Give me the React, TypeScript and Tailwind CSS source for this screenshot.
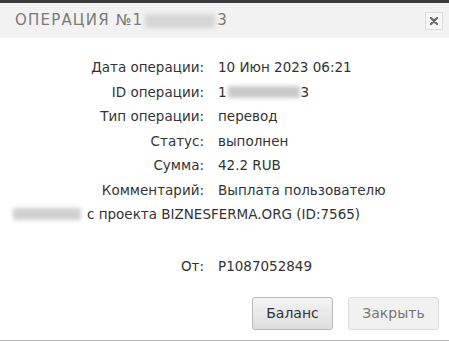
import React from "react";

const rows: [string, React.ReactNode][] = [
  ["Дата операции:", "10 Июн 2023 06:21"],
  [
    "ID операции:",
    <span className="inline-flex items-center">
      1<span className="inline-block w-[72px] h-[12px] bg-[#c9c9c9] blur-[2px] mx-[1px]" />3
    </span>,
  ],
  ["Тип операции:", "перевод"],
  ["Статус:", "выполнен"],
  ["Сумма:", "42.2 RUB"],
  ["Комментарий:", "Выплата пользователю"],
];

const App: React.FC = () => {
  return (
    <div className="w-[449px] h-[341px] bg-white flex flex-col border-t-[3px] border-[#3b3b3b] border-b border-b-[#b5b5b5] font-['DejaVu_Sans',sans-serif] text-[13.5px] text-[#333]">
      <div className="h-[35px] bg-[#f2f2f2] flex items-center justify-between pl-[15px] pr-[6px]">
        <div className="flex items-center text-[#7a7a7a] text-[15px] tracking-[1.2px]">
          ОПЕРАЦИЯ №1
          <span className="inline-block w-[70px] h-[14px] bg-[#d6d6d6] blur-[2px] mx-[2px]" />
          3
        </div>
        <button className="w-[18px] h-[18px] border border-[#dcdcdc] bg-[#f7f7f7] flex items-center justify-center">
          <svg width="8" height="8" viewBox="0 0 8 8">
            <path d="M1 1L7 7M7 1L1 7" stroke="#666" strokeWidth="2.2" strokeLinecap="round" />
          </svg>
        </button>
      </div>

      <div className="pt-[17px] flex flex-col">
        {rows.map(([label, value]) => (
          <div key={label} className="flex h-[24.5px] items-center">
            <div className="w-[204px] text-right">{label}</div>
            <div className="pl-[14px]">{value}</div>
          </div>
        ))}
        <div className="flex h-[24.5px] items-center pl-[13px]">
          <span className="inline-block w-[68px] h-[12px] bg-[#cfcfcf] blur-[2px] mr-[6px]" />
          с проекта BIZNESFERMA.ORG (ID:7565)
        </div>
        <div className="h-[27px]" />
        <div className="flex h-[24.5px] items-center">
          <div className="w-[204px] text-right">От:</div>
          <div className="pl-[14px]">P1087052849</div>
        </div>
      </div>

      <div className="flex justify-end gap-[15px] pr-[10px] mt-[19px]">
        <button className="w-[81px] h-[33px] rounded-[3px] border border-[#b8b8b8] bg-gradient-to-b from-[#f4f4f4] to-[#dedede] text-[#333] text-[14px]">
          Баланс
        </button>
        <button className="w-[91px] h-[33px] rounded-[3px] border border-[#dedede] bg-[#f1f1f1] text-[#777] text-[14px]">
          Закрыть
        </button>
      </div>
    </div>
  );
};

export default App;
